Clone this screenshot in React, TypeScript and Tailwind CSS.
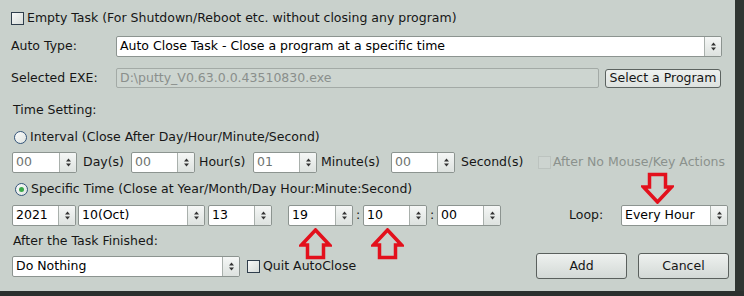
const FONT = "font-['DejaVu_Sans',Verdana,sans-serif]";

const Arrows = () => (
  <svg width="7" height="9" viewBox="0 0 7 9">
    <path d="M3.5 0.5 L6 3.5 H1 Z" fill="#333" />
    <path d="M3.5 8.5 L6 5.5 H1 Z" fill="#333" />
  </svg>
);

type SpinProps = { value: string; w: string; dim?: boolean };

const Spin = ({ value, w, dim }: SpinProps) => (
  <div className={`flex h-[21px] ${w} shrink-0 rounded-[2px] border border-[#8c9490] bg-white`}>
    <div className={`flex flex-1 items-center pl-[3px] ${dim ? "text-[#6e7370]" : "text-black"}`}>{value}</div>
    <div className="flex w-[17px] items-center justify-center rounded-r-[2px] border-l border-[#a9b0ac] bg-gradient-to-b from-[#f5f7f6] to-[#dde2df]">
      <Arrows />
    </div>
  </div>
);

const Check = ({ disabled }: { disabled?: boolean }) => (
  <div
    className={`h-[13px] w-[13px] shrink-0 border ${
      disabled ? "border-[#bcc3bf] bg-[#cdd4d0]" : "border-[#2f3e4c] bg-gradient-to-br from-[#f7f9f8] to-[#d7dcd9]"
    }`}
  />
);

const Radio = ({ on }: { on?: boolean }) => (
  <div className="flex h-[13px] w-[13px] shrink-0 items-center justify-center rounded-full border border-[#34557a] bg-gradient-to-br from-[#fbfcfb] to-[#dfe4e1]">
    {on && <div className="h-[5px] w-[5px] rounded-full bg-[#3aa84a]" />}
  </div>
);

const RedArrow = ({ down, className }: { down?: boolean; className: string }) => (
  <svg
    width="33"
    height="32"
    viewBox="0 0 33 32"
    className={`absolute ${className}`}
    style={{ transform: down ? "rotate(180deg)" : undefined }}
  >
    <polygon
      points="16.5,2 30.5,17 24.5,17 24.5,29.5 8.5,29.5 8.5,17 2.5,17"
      fill="none"
      stroke="#e3101c"
      strokeWidth="3.5"
      strokeLinejoin="miter"
    />
  </svg>
);

export default function App() {
  return (
    <div className={`${FONT} relative flex h-[296px] w-[744px] flex-col overflow-hidden bg-[#2d3330] text-[12.5px] text-[#161616]`}>
      <div className="flex h-[291px]">
        <div className="relative flex w-[735px] flex-col bg-[#c9d1cc] pl-[11px]">
          {/* Empty task */}
          <div className="mt-[8px] flex h-[20px] items-center gap-[3px]">
            <Check />
            <span>Empty Task (For Shutdown/Reboot etc. without closing any program)</span>
          </div>

          {/* Auto type */}
          <div className="mt-[8px] flex h-[21px] items-center">
            <span className="w-[105px]">Auto Type:</span>
            <div className="flex h-[21px] w-[606px] rounded-[2px] border border-[#8c9490] bg-white">
              <div className="flex flex-1 items-center pl-[3px] text-black">Auto Close Task - Close a program at a specific time</div>
              <div className="flex w-[17px] items-center justify-center rounded-r-[2px] border-l border-[#a9b0ac] bg-gradient-to-b from-[#f5f7f6] to-[#dde2df]">
                <Arrows />
              </div>
            </div>
          </div>

          {/* Selected exe */}
          <div className="mt-[11px] flex h-[20px] items-center">
            <span className="w-[105px]">Selected EXE:</span>
            <div className="flex h-[20px] w-[483px] items-center rounded-[2px] border border-[#a3aaa6] bg-[#cdd5d0] pl-[3px] text-[#8a8f8c]">
              D:\putty_V0.63.0.0.43510830.exe
            </div>
            <button
              type="button"
              className="ml-[6px] flex h-[19px] w-[116px] items-center justify-center rounded-[3px] border border-[#5c6360] bg-gradient-to-b from-[#eef1ef] to-[#dde2df] text-[12.5px]"
            >
              Select a Program
            </button>
          </div>

          {/* Time setting */}
          <div className="mt-[12px] flex h-[20px] items-center pl-[2px]">Time Setting:</div>

          <div className="mt-[7px] flex h-[20px] items-center gap-[3px] pl-[3px]">
            <Radio />
            <span>Interval (Close After Day/Hour/Minute/Second)</span>
          </div>

          <div className="mt-[5px] flex h-[21px] items-center pl-[1px]">
            <Spin value="00" w="w-[65px]" dim />
            <span className="ml-[6px] w-[48px]">Day(s)</span>
            <Spin value="00" w="w-[64px]" dim />
            <span className="ml-[4px] w-[54px]">Hour(s)</span>
            <Spin value="01" w="w-[64px]" dim />
            <span className="ml-[4px] w-[70px]">Minute(s)</span>
            <Spin value="00" w="w-[64px]" dim />
            <span className="ml-[6px] w-[77px]">Second(s)</span>
            <Check disabled />
            <span className="ml-[2px] text-[#8b918d]">After No Mouse/Key Actions</span>
          </div>

          <div className="mt-[6px] flex h-[20px] items-center gap-[3px] pl-[4px]">
            <Radio on />
            <span>Specific Time (Close at Year/Month/Day Hour:Minute:Second)</span>
          </div>

          <div className="mt-[6px] flex h-[21px] items-center pl-[1px]">
            <Spin value="2021" w="w-[64px]" />
            <div className="ml-[2px]" />
            <Spin value="10(Oct)" w="w-[127px]" />
            <div className="ml-[3px]" />
            <Spin value="13" w="w-[64px]" />
            <div className="ml-[16px]" />
            <Spin value="19" w="w-[65px]" />
            <span className="w-[10px] text-center">:</span>
            <Spin value="10" w="w-[64px]" />
            <span className="w-[10px] text-center">:</span>
            <Spin value="00" w="w-[64px]" />
            <span className="ml-[68px] w-[52px]">Loop:</span>
            <Spin value="Every Hour" w="w-[107px]" />
          </div>

          <div className="mt-[5px] flex h-[20px] items-center pl-[2px]">After the Task Finished:</div>

          <div className="mt-[2px] flex h-[26px] items-center pl-[1px]">
            <Spin value="Do Nothing" w="w-[228px]" />
            <div className="ml-[7px] flex items-center gap-[3px]">
              <Check />
              <span>Quit AutoClose</span>
            </div>
            <button
              type="button"
              className="ml-auto flex h-[26px] w-[91px] items-center justify-center rounded-[3px] border border-[#5a605d] bg-gradient-to-b from-[#eef1ef] to-[#d3d9d6]"
            >
              Add
            </button>
            <button
              type="button"
              className="ml-[11px] mr-[6px] flex h-[26px] w-[91px] items-center justify-center rounded-[3px] border border-[#5a605d] bg-gradient-to-b from-[#eef1ef] to-[#d3d9d6]"
            >
              Cancel
            </button>
          </div>

          {/* annotation arrows */}
          <RedArrow className="left-[299px] top-[228px]" />
          <RedArrow className="left-[371px] top-[228px]" />
          <RedArrow down className="left-[641px] top-[172px]" />
        </div>
        <div className="flex-1 bg-[#2f3532]" />
      </div>
      <div className="h-[5px] bg-[#2b302e]" />
    </div>
  );
}
